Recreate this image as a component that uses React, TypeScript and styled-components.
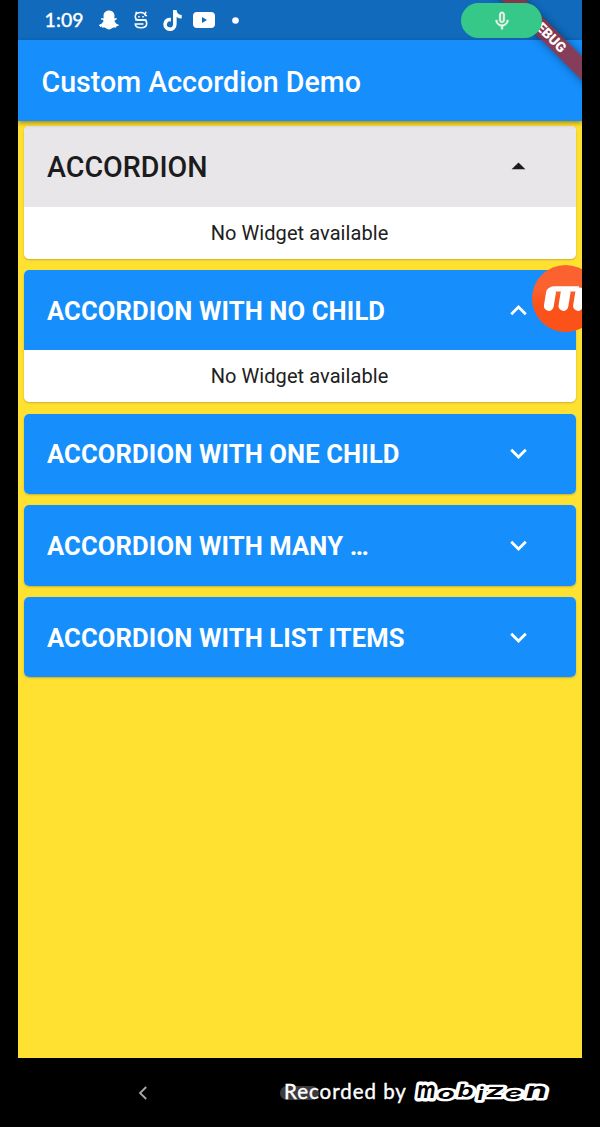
import React from 'react';
import styled, { createGlobalStyle } from 'styled-components';
import { FaSnapchatGhost, FaTiktok } from 'react-icons/fa';
import { MdExpandLess, MdExpandMore, MdArrowDropUp, MdMicNone } from 'react-icons/md';

const GlobalStyle = createGlobalStyle`
  * { box-sizing: border-box; }
  body { margin: 0; background: #000; font-family: Roboto, sans-serif; }
`;

const Device = styled.div`
  width: 600px;
  height: 1127px;
  padding: 0 18px;
  background: #000;
  overflow: hidden;
`;

const Screen = styled.main`
  position: relative;
  width: 564px;
  height: 1058px;
  display: flex;
  flex-direction: column;
  background: #ffe132;
  overflow: hidden;
`;

const StatusBar = styled.div`
  flex: none;
  height: 40px;
  padding: 0 0 0 26px;
  display: flex;
  align-items: center;
  background: #116abb;
  color: #fff;
`;

const Clock = styled.span`
  width: 55px;
  padding-left: 0.5px;
  font-family: Lato, sans-serif;
  font-size: 19.5px;
  line-height: 40px;
  font-weight: 500;
  letter-spacing: 0.1px;
  -webkit-text-stroke: 0.3px #fff;
`;

const StatusIcon = styled.span<{ $w: number }>`
  width: ${p => p.$w}px;
  display: flex;
  align-items: center;
  svg { display: block; flex: none; }
`;

const AppBar = styled.header`
  position: relative;
  flex: none;
  height: 81px;
  padding-left: 23.5px;
  display: flex;
  align-items: center;
  background: #168efb;
  box-shadow: 0 2px 5px rgba(0, 0, 0, 0.4);
`;

const Title = styled.h1`
  margin: 2px 0 0;
  color: #fff;
  font-size: 28.6px;
  font-weight: 500;
  line-height: 36px;
  white-space: nowrap;
`;

const List = styled.section`
  padding: 5.4px 6px 0;
  display: flex;
  flex-direction: column;
  gap: 11.5px;
`;

const Card = styled.article`
  border-radius: 5px;
  overflow: hidden;
  background: #fff;
  box-shadow: 0 1px 2px rgba(0, 0, 0, 0.22);
`;

const CardHeader = styled.div<{ $plain?: boolean }>`
  height: 80.2px;
  padding: 1px 41px 0 23px;
  display: flex;
  align-items: center;
  justify-content: space-between;
  background: ${p => (p.$plain ? '#e8e6e8' : '#168efb')};
  color: ${p => (p.$plain ? '#1c1b1d' : '#fff')};
  svg { display: block; margin-top: -1px; }
`;

const CardTitle = styled.h2<{ $plain?: boolean }>`
  margin: 0;
  font-size: ${p => (p.$plain ? '28.6px' : '25.6px')};
  font-weight: ${p => (p.$plain ? 500 : 700)};
  letter-spacing: ${p => (p.$plain ? '0' : '0.12px')};
  line-height: 36px;
  white-space: nowrap;
`;

const CardBody = styled.p`
  height: 52px;
  margin: 0 1px 0 0;
  text-align: center;
  color: #202020;
  font-size: 20px;
  line-height: 52px;
  letter-spacing: 0.07px;
`;

const Ribbon = styled.div`
  position: absolute;
  left: 430px;
  top: 26px;
  width: 200px;
  height: 16.5px;
  transform: rotate(45deg);
  background: rgba(166, 38, 45, 0.78);
  box-shadow: 0 0 8px rgba(0, 0, 0, 0.4);
  color: #fff;
  font-size: 14px;
  line-height: 17px;
  font-weight: 900;
  text-align: center;
`;

const MicPill = styled.div`
  position: absolute;
  left: 443px;
  top: 3px;
  width: 81px;
  height: 35px;
  border-radius: 18px;
  display: flex;
  align-items: center;
  justify-content: center;
  background: #35c888;
  color: #eef5e8;
  svg path:last-child { stroke: #eef5e8; stroke-width: 0.5; }
`;

const FloatingButton = styled.div`
  position: absolute;
  left: 514px;
  top: 264.5px;
  width: 67px;
  height: 67px;
  border-radius: 50%;
  overflow: hidden;
  background: linear-gradient(#fb6230 0 35%, #fb521a 60%);
  svg { display: block; }
`;

const NavBar = styled.footer`
  position: relative;
  height: 69px;
  padding-left: 119px;
  display: flex;
  align-items: center;
`;

const HomeHandle = styled.div`
  width: 39px;
  height: 14px;
  margin-left: 131px;
  border-radius: 7px;
  background: #3d3a3e;
`;

const Credit = styled.div`
  position: absolute;
  left: 266px;
  top: 15px;
  display: flex;
  color: #fff;
  font-family: Lato, sans-serif;
  font-size: 20.5px;
  line-height: 36px;
  letter-spacing: 0.98px;
  white-space: nowrap;
  -webkit-text-stroke: 0.4px #fff;
  svg { position: absolute; left: 123px; top: 0; letter-spacing: 0; -webkit-text-stroke: 0; }
`;

const LogoOutline = styled.text`
  fill: #fff;
  stroke: #fff;
  stroke-width: 6.5px;
  stroke-linejoin: round;
  vector-effect: non-scaling-stroke;
`;

const LogoFace = styled.text`
  fill: #000;
`;

const logoLetters = [
  { c: 'm', x: 10, y: 24.5, sx: 0.86, size: 23.5 },
  { c: 'o', x: 30.5, y: 26, sx: 1.7, size: 16.5 },
  { c: 'b', x: 50.5, y: 24, sx: 1.45, size: 17.5 },
  { c: 'i', x: 70.5, y: 27, sx: 1.3, size: 17 },
  { c: 'z', x: 79, y: 23.5, sx: 1.85, size: 17 },
  { c: 'e', x: 98, y: 26, sx: 1.75, size: 16.5 },
  { c: 'n', x: 119, y: 24.5, sx: 1.6, size: 21 },
];

function MobizenLogo() {
  const place = (l: (typeof logoLetters)[number]) => ({
    transform: `translate(${l.x} ${l.y}) scale(${l.sx} 1)`,
    fontSize: l.size,
  });
  return (
    <svg width="150" height="38" fontFamily="Inter, sans-serif" fontWeight="700" fontStyle="italic">
      {logoLetters.map(l => <LogoOutline key={l.c} {...place(l)} aria-hidden>{l.c}</LogoOutline>)}
      {logoLetters.map(l => <LogoFace key={l.c} {...place(l)}>{l.c}</LogoFace>)}
    </svg>
  );
}

const panels = [
  { title: 'ACCORDION', plain: true, open: true },
  { title: 'ACCORDION WITH NO CHILD', open: true },
  { title: 'ACCORDION WITH ONE CHILD' },
  { title: 'ACCORDION WITH MANY …' },
  { title: 'ACCORDION WITH LIST ITEMS' },
];

export default function App() {
  return (
    <Device>
      <GlobalStyle />
      <Screen>
        <StatusBar>
          <Clock>1:09</Clock>
          <StatusIcon $w={35}><FaSnapchatGhost size={20} /></StatusIcon>
          <StatusIcon $w={28}>
            <svg width="14" height="18" viewBox="0 0 14 18" fill="none" stroke="#fff" strokeWidth="1.6">
              <path d="M13 4.5H11.5Q10.5 1.5 7 1.5 1.3 1.5 1.3 5.5 1.3 9 5 9H9.5Q12.7 9 12.7 12.2 12.7 16.8 7 16.8 1.3 16.8 1.3 13H9.5" />
              <path d="M2.5 2.5L2 .7M11 3L12 .7M4.2 5.7H5.8M8.2 5.7H9.8M1.3 9H12.7" />
            </svg>
          </StatusIcon>
          <StatusIcon $w={31}><FaTiktok size={21} /></StatusIcon>
          <StatusIcon $w={39}>
            <svg width="22" height="16" viewBox="0 0 22 16">
              <rect width="22" height="16" rx="4" fill="#fff" />
              <path d="M9 5L14 8L9 11Z" fill="#116abb" />
            </svg>
          </StatusIcon>
          <StatusIcon $w={7}>
            <svg width="7" height="7"><circle cx="3.5" cy="3.5" r="3.3" fill="#fff" /></svg>
          </StatusIcon>
        </StatusBar>
        <AppBar><Title>Custom Accordion Demo</Title></AppBar>
        <List>
          {panels.map(p => (
            <Card key={p.title}>
              <CardHeader $plain={p.plain}>
                <CardTitle $plain={p.plain}>{p.title}</CardTitle>
                {p.plain ? <MdArrowDropUp size={33} /> : p.open ? <MdExpandLess size={33} /> : <MdExpandMore size={33} />}
              </CardHeader>
              {p.open && <CardBody>No Widget available</CardBody>}
            </Card>
          ))}
        </List>
        <Ribbon>DEBUG</Ribbon>
        <MicPill><MdMicNone size={22} /></MicPill>
        <FloatingButton>
          <svg width="67" height="67" fill="none" stroke="#fff" strokeWidth="9.8" strokeLinecap="round">
            <path d="M16.8 41L19 27.5M31.4 41L33.6 27.5M46 41L48.2 27.5" />
            <path d="M22 21.3H47V26.5H16Q17 21.3 22 21.3Z" fill="#fff" stroke="none" />
          </svg>
        </FloatingButton>
      </Screen>
      <NavBar>
        <svg width="12" height="16" viewBox="0 0 12 16" fill="none" stroke="#aaa" strokeWidth="1.8">
          <path d="M9.2 2L3 8L9.2 14" />
        </svg>
        <HomeHandle />
        <Credit>
          Recorded by
          <MobizenLogo />
        </Credit>
      </NavBar>
    </Device>
  );
}
